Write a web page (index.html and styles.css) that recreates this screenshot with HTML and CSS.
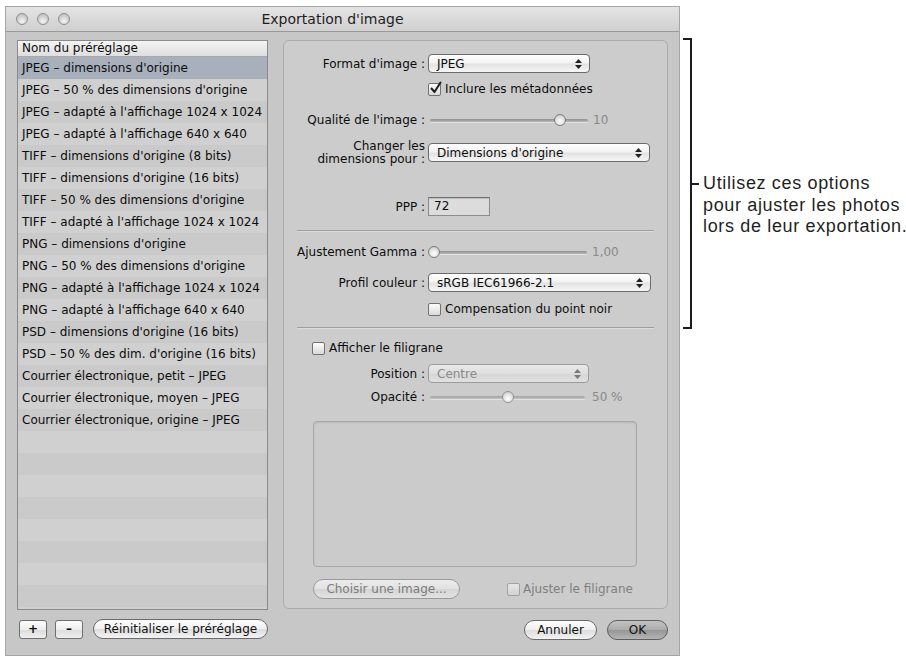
FILE: index.html
```html
<!DOCTYPE html>
<html lang="fr">
<head>
<meta charset="utf-8">
<title>Exportation d'image</title>
<link rel="stylesheet" href="styles.css">
</head>
<body>
<div class="stage">
  <div class="window">
    <div class="titlebar">
      <div class="lights"><span class="light"></span><span class="light"></span><span class="light"></span></div>
      <div class="title">Exportation d'image</div>
      <div></div>
    </div>
    <div class="content">
      <div class="left">
        <div class="list">
          <div class="list-head">Nom du préréglage</div>
          <div class="rows">
            <div class="row sel">JPEG – dimensions d'origine</div>
            <div class="row">JPEG – 50 % des dimensions d'origine</div>
            <div class="row">JPEG – adapté à l'affichage 1024 x 1024</div>
            <div class="row">JPEG – adapté à l'affichage 640 x 640</div>
            <div class="row">TIFF – dimensions d'origine (8 bits)</div>
            <div class="row">TIFF – dimensions d'origine (16 bits)</div>
            <div class="row">TIFF – 50 % des dimensions d'origine</div>
            <div class="row">TIFF – adapté à l'affichage 1024 x 1024</div>
            <div class="row">PNG – dimensions d'origine</div>
            <div class="row">PNG – 50 % des dimensions d'origine</div>
            <div class="row">PNG – adapté à l'affichage 1024 x 1024</div>
            <div class="row">PNG – adapté à l'affichage 640 x 640</div>
            <div class="row">PSD – dimensions d'origine (16 bits)</div>
            <div class="row">PSD – 50 % des dim. d'origine (16 bits)</div>
            <div class="row">Courrier électronique, petit – JPEG</div>
            <div class="row">Courrier électronique, moyen – JPEG</div>
            <div class="row">Courrier électronique, origine – JPEG</div>
          </div>
        </div>
        <div class="left-buttons">
          <div class="sq">+</div>
          <div class="sq">–</div>
          <div class="pill reset">Réinitialiser le préréglage</div>
        </div>
      </div>
      <div class="right">
        <div class="panel">
          <div class="frow row-format">
            <div class="lbl">Format d'image :</div>
            <div class="popup w-format"><span>JPEG</span><svg class="arrows" width="7" height="10" viewBox="0 0 7 10"><path d="M3.5 0 L7 4 L0 4 Z M0 6 L7 6 L3.5 10 Z" fill="#222"/></svg></div>
          </div>
          <div class="frow row-meta">
            <div></div>
            <div class="check-line"><span class="cb"><svg class="tick" width="14" height="15" viewBox="0 0 14 15"><path d="M2.5 7.5 L5.5 11 L11.5 1.5" fill="none" stroke="#1e1e1e" stroke-width="2" stroke-linecap="round" stroke-linejoin="round"/></svg></span><span>Inclure les métadonnées</span></div>
          </div>
          <div class="frow row-quality">
            <div class="lbl">Qualité de l'image :</div>
            <div class="slider-line"><div class="slider w158 ml2"><div class="track"></div><span class="knob" style="left:124px"></span></div><span class="val">10</span></div>
          </div>
          <div class="frow row-dims">
            <div class="lbl two">Changer les<br>dimensions pour :</div>
            <div class="popup w-dims top3"><span>Dimensions d'origine</span><svg class="arrows" width="7" height="10" viewBox="0 0 7 10"><path d="M3.5 0 L7 4 L0 4 Z M0 6 L7 6 L3.5 10 Z" fill="#222"/></svg></div>
          </div>
          <div class="frow row-ppp">
            <div class="lbl">PPP :</div>
            <div class="field">72</div>
          </div>
          <div class="sep sep1"></div>
          <div class="frow row-gamma">
            <div class="lbl">Ajustement Gamma :</div>
            <div class="slider-line"><div class="slider w159"><div class="track"></div><span class="knob" style="left:0px"></span></div><span class="val">1,00</span></div>
          </div>
          <div class="frow row-profile">
            <div class="lbl">Profil couleur :</div>
            <div class="popup w-profile"><span>sRGB IEC61966-2.1</span><svg class="arrows" width="7" height="10" viewBox="0 0 7 10"><path d="M3.5 0 L7 4 L0 4 Z M0 6 L7 6 L3.5 10 Z" fill="#222"/></svg></div>
          </div>
          <div class="frow row-comp">
            <div></div>
            <div class="check-line"><span class="cb"></span><span>Compensation du point noir</span></div>
          </div>
          <div class="sep sep2"></div>
          <div class="check-line row-water"><span class="cb"></span><span>Afficher le filigrane</span></div>
          <div class="frow row-position">
            <div class="lbl">Position :</div>
            <div class="popup disabled w-position"><span>Centre</span><svg class="arrows" width="7" height="10" viewBox="0 0 7 10"><path d="M3.5 0 L7 4 L0 4 Z M0 6 L7 6 L3.5 10 Z" fill="#7a7a7a"/></svg></div>
          </div>
          <div class="frow row-opacity">
            <div class="lbl">Opacité :</div>
            <div class="slider-line"><div class="slider w155 ml2 dim"><div class="track"></div><span class="knob" style="left:72px"></span></div><span class="val val-op">50 %</span></div>
          </div>
          <div class="well"></div>
          <div class="panel-foot">
            <div class="pill disabled choose">Choisir une image...</div>
            <div class="check-line fit"><span class="cb disabled"></span><span>Ajuster le filigrane</span></div>
          </div>
        </div>
        <div class="right-buttons">
          <div class="pill cancel">Annuler</div>
          <div class="pill ok">OK</div>
        </div>
      </div>
    </div>
  </div>
  <div class="note">
    <div class="bracket"></div>
    <div class="tail">
      <span class="tick-line"></span>
      <p class="note-text">Utilisez ces options<br>pour ajuster les photos<br>lors de leur exportation.</p>
    </div>
  </div>
</div>
</body>
</html>
```
FILE: styles.css
```css
* { box-sizing: border-box; }

body {
  margin: 0;
  background: #ffffff;
  font-family: "DejaVu Sans", "Noto Sans", sans-serif;
  font-size: 12px;
  color: #0c0c0c;
}

.stage {
  display: flex;
  align-items: flex-start;
  padding: 6px 0 0 5px;
}

/* window */
.window {
  flex: none;
  width: 675px;
  height: 650px;
  border: 1px solid #a6a6a6;
  background: #c7c7c7;
  display: flex;
  flex-direction: column;
}

.titlebar {
  flex: none;
  height: 25px;
  display: grid;
  grid-template-columns: 70px 1fr 90px;
  align-items: center;
  background: linear-gradient(#e4e4e4, #cfcfcf);
  border-bottom: 1px solid #9a9a9a;
}

.lights {
  display: flex;
  gap: 9px;
  padding-left: 10px;
}

.light {
  width: 12px;
  height: 12px;
  border-radius: 50%;
  border: 1px solid #8e8e8e;
  background: radial-gradient(circle at 50% 72%, #f6f6f6 0, #d6d6d6 45%, #b9b9b9 100%);
}

.title {
  text-align: center;
  font-size: 14px;
  color: #1e1e1e;
}

.content {
  flex: 1;
  display: flex;
  gap: 15px;
  padding: 8px 11px 0 11px;
}

/* left column */
.left {
  flex: none;
  width: 251px;
  display: flex;
  flex-direction: column;
}

.list {
  height: 570px;
  border: 1px solid #8a8a8a;
  background: #cbcbcb;
  overflow: hidden;
  display: flex;
  flex-direction: column;
}

.list-head {
  flex: none;
  height: 16px;
  line-height: 15px;
  padding-left: 4px;
  background: linear-gradient(#f4f4f4, #dedede);
  border-bottom: 1px solid #a9a9a9;
}

.rows {
  flex: 1;
  background: repeating-linear-gradient(#cacaca 0 22px, #d0d0d0 22px 44px);
}

.row {
  height: 22px;
  line-height: 23px;
  padding-left: 4px;
  white-space: nowrap;
}

.row.sel { background: #a8b0bc; }

.left-buttons {
  display: flex;
  align-items: center;
  gap: 8px;
  margin-top: 9px;
  padding-left: 2px;
  height: 20px;
}

.sq {
  width: 28px;
  height: 19px;
  border: 1px solid #6e6e6e;
  border-radius: 3px;
  background: linear-gradient(#fcfcfc, #eeeeee 50%, #dcdcdc 51%, #efefef);
  display: flex;
  align-items: center;
  justify-content: center;
  font-weight: bold;
  font-size: 12px;
}

.pill {
  height: 20px;
  border: 1px solid #6a6a6a;
  border-radius: 10px;
  background: linear-gradient(#fdfdfd, #f0f0f0 48%, #dddddd 52%, #f3f3f3);
  display: flex;
  align-items: center;
  justify-content: center;
  white-space: nowrap;
  color: #111;
}

.reset { width: 175px; margin-left: 2px; }

/* right column */
.right {
  flex: none;
  width: 385px;
  display: flex;
  flex-direction: column;
}

.panel {
  height: 569px;
  border: 1px solid #ababab;
  border-radius: 6px;
  background: #cccccc;
  padding: 13px 13px 0 13px;
  display: flex;
  flex-direction: column;
}

.frow {
  display: grid;
  grid-template-columns: 128px auto;
  column-gap: 3px;
  align-items: center;
  justify-content: start;
}

.lbl {
  text-align: right;
  white-space: nowrap;
}

.lbl.two { line-height: 13px; }

.row-format { height: 19px; }
.row-meta { height: 14px; margin-top: 9px; }
.row-quality { height: 18px; margin-top: 15px; }
.row-dims { height: 26px; margin-top: 11px; align-items: start; }
.row-ppp { height: 19px; margin-top: 31px; }
.row-gamma { height: 18px; margin-top: 11px; }
.row-profile { height: 19px; margin-top: 12px; }
.row-comp { height: 14px; margin-top: 10px; }
.row-water { height: 14px; margin-top: 12px; margin-left: 15px; }
.row-position { height: 18px; margin-top: 9px; }
.row-opacity { height: 18px; margin-top: 6px; }

.sep {
  height: 2px;
  border-top: 1px solid #9f9f9f;
  border-bottom: 1px solid #dcdcdc;
}
.sep1 { margin-top: 14px; }
.sep2 { margin-top: 11px; }

/* popup buttons */
.popup {
  height: 19px;
  border: 1px solid #6b6b6b;
  border-radius: 4px;
  background: linear-gradient(#ffffff, #f3f3f3 45%, #e3e3e3 55%, #f6f6f6);
  display: flex;
  align-items: center;
  justify-content: space-between;
  padding: 0 7px 0 8px;
  white-space: nowrap;
}
.popup.top3 { margin-top: 3px; }
.w-format { width: 162px; }
.w-dims { width: 222px; }
.w-profile { width: 223px; }
.w-position { width: 161px; }

.popup.disabled {
  border-color: #9c9c9c;
  background: linear-gradient(#e9e9e9, #dedede 50%, #d6d6d6 51%, #e0e0e0);
  color: #8a8a8a;
}

.arrows { flex: none; }

/* checkboxes */
.check-line {
  display: flex;
  align-items: center;
  gap: 4px;
  white-space: nowrap;
}

.cb {
  position: relative;
  flex: none;
  width: 13px;
  height: 13px;
  border: 1px solid #727272;
  border-radius: 2px;
  background: linear-gradient(#fdfdfd, #d9d9d9);
}

.cb.disabled {
  border-color: #a3a3a3;
  background: linear-gradient(#e6e6e6, #d2d2d2);
}

.tick {
  position: absolute;
  left: 0;
  top: -3px;
}

/* sliders */
.slider-line {
  display: flex;
  align-items: center;
  height: 18px;
}

.slider {
  position: relative;
  height: 18px;
  display: flex;
  align-items: center;
}
.w158 { width: 158px; }
.w159 { width: 159px; }
.w155 { width: 155px; }
.ml2 { margin-left: 2px; }

.track {
  flex: 1;
  height: 3px;
  border-radius: 2px;
  background: linear-gradient(#8f8f8f, #b7b7b7);
  box-shadow: 0 1px 0 #e2e2e2;
}

.knob {
  position: absolute;
  top: 3px;
  width: 12px;
  height: 12px;
  border-radius: 50%;
  border: 1px solid #7d7d7d;
  background: radial-gradient(circle at 50% 65%, #ffffff 0, #e6e6e6 45%, #bdbdbd 100%);
}

.slider.dim .knob { border-color: #939393; }
.slider.dim .track { background: linear-gradient(#a2a2a2, #c2c2c2); }

.val {
  margin-left: 5px;
  color: #8a8a8a;
}
.val-op { margin-left: 7px; }

/* text field */
.field {
  width: 62px;
  height: 19px;
  border: 1px solid #8c8c8c;
  border-top-color: #6f6f6f;
  background: #dcdcdc;
  box-shadow: inset 0 1px 1px rgba(0, 0, 0, 0.15);
  padding-left: 5px;
  line-height: 17px;
}

/* watermark well */
.well {
  height: 146px;
  margin: 15px 17px 0 16px;
  border: 1px solid #a8a8a8;
  border-radius: 4px;
  background: #cbcbcb;
  box-shadow: inset 0 1px 2px rgba(0, 0, 0, 0.1);
}

.panel-foot {
  display: flex;
  align-items: center;
  margin-top: 12px;
  padding-left: 16px;
}

.pill.disabled {
  border-color: #9a9a9a;
  background: linear-gradient(#ececec, #e2e2e2 48%, #d5d5d5 52%, #e2e2e2);
  color: #7c7c7c;
}

.choose { width: 147px; }

.fit {
  margin-left: 47px;
  color: #7f7f7f;
  gap: 3px;
}

.right-buttons {
  display: flex;
  justify-content: flex-end;
  gap: 10px;
  margin-top: 11px;
}

.cancel { width: 73px; }

.ok {
  width: 61px;
  border-color: #5e5e5e;
  background: linear-gradient(#c2c2c2, #acacac 48%, #969696 52%, #b4b4b4);
}

/* annotation */
.note {
  display: flex;
  align-items: flex-start;
  margin-top: 32px;
  margin-left: 3px;
}

.bracket {
  flex: none;
  width: 9px;
  height: 291px;
  border: 2px solid #1c1c1c;
  border-left: none;
}

.tail {
  display: flex;
  align-items: flex-start;
  margin-top: 135px;
}

.tick-line {
  flex: none;
  width: 7px;
  height: 2px;
  margin-top: 10px;
  background: #1c1c1c;
}

.note-text {
  margin: 0 0 0 4px;
  font-family: "Liberation Sans", Arial, sans-serif;
  font-size: 18px;
  letter-spacing: 0.65px;
  line-height: 21.5px;
  color: #1f1f1f;
  white-space: nowrap;
}
```
